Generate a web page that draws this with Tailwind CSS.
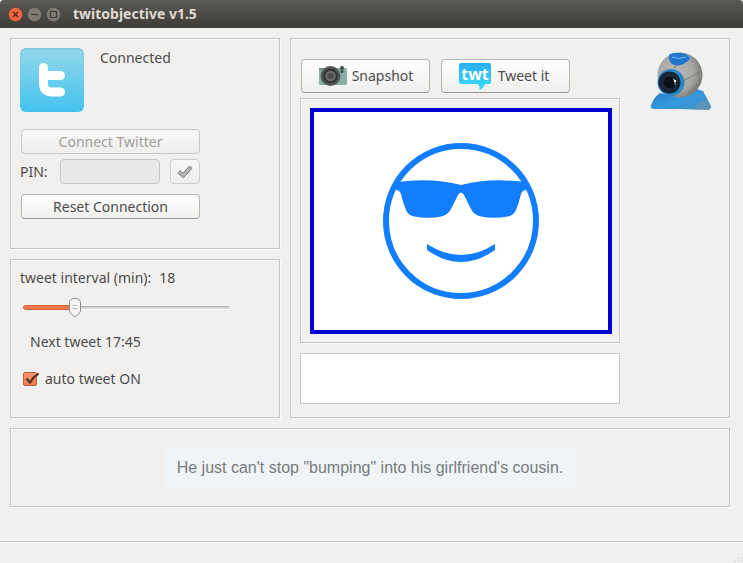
<!DOCTYPE html>
<html lang="en">
<head>
<meta charset="utf-8">
<meta name="viewport" content="width=device-width, initial-scale=1">
<title>twitobjective v1.5</title>
<script src="https://cdn.jsdelivr.net/npm/@tailwindcss/browser@4"></script>
</head>
<body class="flex min-h-screen flex-col bg-[#f1f0ee] font-['Noto_Sans',sans-serif] text-sm leading-5 text-[#4c4c4c]">

<header class="flex h-7 items-center rounded-t bg-linear-to-b from-[#5b5a54] to-[#3d3c37] pl-2">
  <div class="flex gap-1">
    <button type="button" aria-label="Close" class="size-[15px]">
      <svg viewBox="0 0 15 15" class="size-[15px]"><circle cx="7.500" cy="7.500" r="7.200" fill="#ee6540" stroke="#3b352d" stroke-width=".6"/><path d="M5 5l5 5M10 5l-5 5" stroke="#4a2318" stroke-width="1.200"/></svg>
    </button>
    <button type="button" aria-label="Minimize" class="size-[15px]">
      <svg viewBox="0 0 15 15" class="size-[15px]"><circle cx="7.500" cy="7.500" r="7.200" fill="#7d7b74" stroke="#3b3a35" stroke-width=".6"/><path d="M4 7.500h7" stroke="#3c3b37" stroke-width="1.200"/></svg>
    </button>
    <button type="button" aria-label="Maximize" class="size-[15px]">
      <svg viewBox="0 0 15 15" class="size-[15px]"><circle cx="7.500" cy="7.500" r="7.200" fill="#7d7b74" stroke="#3b3a35" stroke-width=".6"/><path d="M4.500 4.500h6v6h-6z" fill="none" stroke="#3c3b37" stroke-width="1.200"/></svg>
    </button>
  </div>
  <h1 class="ml-3 text-sm font-bold text-[#dfdbd2]">twitobjective v1.5</h1>
</header>

<main class="flex flex-1 flex-col gap-2.5 pt-2.5 pr-[13px] pb-[34px] pl-2.5">
  <div class="grid grid-cols-[270px_1fr] gap-2.5">
    <div class="flex flex-col gap-2.5">
      <section class="flex flex-1 flex-col border border-[#c6c5c3] p-[9px] pb-6 shadow-[inset_1px_1px_0_#fbfbfa,1px_1px_0_#fbfbfa]">
        <div class="flex gap-4">
          <svg viewBox="0 0 64 64" class="size-16" role="img" aria-label="Twitter">
            <defs><linearGradient id="sky" x1="0" y1="0" x2="0" y2="1"><stop offset="0" stop-color="#93d8ec"/><stop offset="1" stop-color="#43c3ee"/></linearGradient></defs>
            <rect width="64" height="64" rx="6" fill="url(#sky)"/>
            <path d="M1 6q0-5 5-5h52q5 0 5 5" fill="none" stroke="#73bfd6"/>
            <path d="M23.500 19.500v16q0 8.500 8.500 8.500h8.500M24 27.500h16.500" fill="none" stroke="#fff" stroke-width="9" stroke-linecap="round"/>
          </svg>
          <p>Connected</p>
        </div>
        <div class="mt-[17px] ml-px flex w-[179px] flex-col">
          <button type="button" disabled class="h-[25px] rounded border border-[#c9c8c6] bg-linear-to-b from-[#f8f8f7] to-[#efeeec] text-[#a09f9d]">Connect Twitter</button>
          <div class="mt-[5px] -ml-px flex items-center">
            <label for="pin" class="w-10">PIN:</label>
            <input id="pin" type="text" disabled class="h-[25px] w-[100px] rounded border border-[#c6c5c3] bg-[#e9e9e8] px-2">
            <button type="button" disabled aria-label="Confirm PIN" class="ml-auto flex h-[25px] w-[30px] items-center justify-center rounded border border-[#cfcecc] bg-linear-to-b from-[#f8f8f7] to-[#efeeec]">
              <svg viewBox="0 0 16 14" class="h-3.5 w-4"><path d="M.8 8.200L3.300 5.700 6 8.300 12.600 1 15 3.200 6.500 12.800z" fill="#b5b5b4" stroke="#777" stroke-width=".9"/></svg>
            </button>
          </div>
          <button type="button" class="mt-2.5 h-[25px] rounded border border-[#b7b5b2] border-b-[#999] bg-linear-to-b from-white to-[#efefed]">Reset Connection</button>
        </div>
      </section>

      <section class="border border-[#c6c5c3] px-[9px] pt-2 pb-7 shadow-[inset_1px_1px_0_#fbfbfa,1px_1px_0_#fbfbfa]">
        <div class="flex gap-2">
          <label for="interval">tweet interval (min):</label>
          <output for="interval">18</output>
        </div>
        <div class="relative mt-2 ml-0.5 h-6 w-[208px]">
          <svg viewBox="0 0 208 24" class="absolute inset-0 h-6 w-52" aria-hidden="true">
            <path d="M1 13.500h206" stroke="#fff"/>
            <rect x="1" y="10" width="206" height="3" rx="1.500" fill="#d8d8d6"/>
            <path d="M1 10.500h206" stroke="#b1b0ae"/>
            <rect x="1.500" y="9.500" width="52" height="4" rx="2" fill="#f2784c" stroke="#d3623a"/>
            <path d="M47.500 7q0-4.500 5.500-4.500t5.500 4.500v8q0 2-5.500 6-5.500-4-5.500-6z" fill="#f6f6f5" stroke="#8e8d8b"/>
            <path d="M50.500 9.500h5M50.500 12.500h5" stroke="#bbb"/>
          </svg>
          <input id="interval" type="range" min="5" max="60" value="18" class="absolute inset-0 w-full appearance-none bg-transparent [&::-webkit-slider-thumb]:h-6 [&::-webkit-slider-thumb]:w-3 [&::-webkit-slider-thumb]:appearance-none">
        </div>
        <p class="mt-3 ml-2.5">Next tweet 17:45</p>
        <div class="mt-[17px] ml-[3px] flex items-center gap-2">
          <span class="relative size-3.5">
            <input id="auto" type="checkbox" checked class="block size-3.5 appearance-none rounded-xs border border-[#b5603e] bg-linear-to-b from-[#f7956f] to-[#ee7a4f]">
            <svg viewBox="0 0 16 14" class="pointer-events-none absolute top-0 left-0 h-3.5 w-4" aria-hidden="true"><path d="M3.500 6.500L7 10.500Q10 5 15.500 1.500" fill="none" stroke="#5a3020" stroke-width="2.200"/></svg>
          </span>
          <label for="auto">auto tweet ON</label>
        </div>
      </section>
    </div>

    <section class="flex items-start border border-[#c6c5c3] p-[9px] pb-[13px] shadow-[inset_1px_1px_0_#fbfbfa,1px_1px_0_#fbfbfa]">
      <div class="flex flex-1 flex-col pt-[11px]">
        <div class="ml-px flex gap-[11px]">
          <button type="button" class="flex h-[34px] w-[129px] items-center justify-center gap-1 rounded border border-[#b7b5b2] border-b-[#999] bg-linear-to-b from-white to-[#efefed]">
            <svg viewBox="0 0 30 22" class="h-[22px] w-[30px]" aria-hidden="true">
              <rect x="1" y="3" width="28" height="17" rx="1.500" fill="#89aea5"/>
              <rect x="1" y="3" width="10" height="2" fill="#6f8f88"/>
              <circle cx="12.500" cy="11" r="10" fill="#555657"/>
              <circle cx="12.500" cy="11" r="7.400" fill="#343536"/>
              <circle cx="12.500" cy="11" r="5.200" fill="#6c6d6e"/>
              <circle cx="12.500" cy="11" r="3" fill="#4a4b4c"/>
              <circle cx="24" cy="3" r="2" fill="#3f4b4b"/><circle cx="24" cy="6.500" r="1.500" fill="#3f4b4b"/>
            </svg>
            Snapshot
          </button>
          <button type="button" class="flex h-[34px] w-[129px] items-center justify-center gap-1.5 rounded border border-[#b7b5b2] border-b-[#999] bg-linear-to-b from-white to-[#efefed] pr-1">
            <svg viewBox="0 0 34 30" class="h-[30px] w-[34px]" aria-hidden="true">
              <defs><linearGradient id="bubble" x1="0" y1="0" x2="0" y2="1"><stop offset="0" stop-color="#2aaef0"/><stop offset="1" stop-color="#3bdcfb"/></linearGradient></defs>
              <path d="M3 2h28q2 0 2 2v17q0 2-2 2h-4q-1 4-5.500 6 1-3-1.500-6H3q-2 0-2-2V4q0-2 2-2z" fill="url(#bubble)"/>
              <text x="17" y="19" text-anchor="middle" fill="#fff" class="font-['Noto_Sans',sans-serif] text-base font-bold">twt</text>
            </svg>
            Tweet it
          </button>
        </div>
        <div class="mt-[5px] border border-[#c6c5c3] p-[9px] pr-[7px] pb-2 shadow-[inset_1px_1px_0_#fbfbfa,1px_1px_0_#fbfbfa]">
          <div class="flex h-[226px] items-center justify-center border-4 border-[#0000d0] bg-white">
            <svg viewBox="0 0 156 156" class="size-[156px]" role="img" aria-label="Smiling face with sunglasses">
              <circle cx="78" cy="78" r="75" fill="none" stroke="#127dfe" stroke-width="6"/>
              <path d="M14 39Q50 34.500 78 42 106 34.500 142 39L146 47Q140 46 138 51 136 60 133 67 131 72 125 73.500 110 76 98 73.500 91 72 88 66L81 52Q78 47 75 52L68 66Q65 72 58 73.500 46 76 31 73.500 25 72 23 67 20 60 18 51 16 46 10 47z" fill="#127dfe"/>
              <path d="M44 101Q78 123 112 101v6Q78 131 44 107z" fill="#127dfe"/>
            </svg>
          </div>
        </div>
        <textarea aria-label="Tweet text" class="mt-2.5 block h-[51px] w-full resize-none border border-[#c6c5c3] bg-white p-1"></textarea>
      </div>
      <div class="flex w-[100px] justify-end pt-1 pr-2">
        <svg viewBox="0 0 62 60" class="h-[60px] w-[62px]" role="img" aria-label="Webcam">
          <defs>
            <radialGradient id="ball" cx=".4" cy=".45" r=".65"><stop offset="0" stop-color="#bdbbb8"/><stop offset=".6" stop-color="#aaa8a5"/><stop offset="1" stop-color="#73716f"/></radialGradient>
            <linearGradient id="foot" x1="0" y1="0" x2="1" y2="1"><stop offset="0" stop-color="#2678bd"/><stop offset=".5" stop-color="#3398df"/><stop offset="1" stop-color="#4a8fbd"/></linearGradient>
          </defs>
          <path d="M10 41Q30 49 47 37L53 39 61 54Q61 58 57 58L30 57 4 57Q0 57 1 53 4 45 10 41z" fill="url(#foot)"/>
          <path d="M45 53L56 48 61 55Q61 58 57 58L46 58z" fill="#7198ad" opacity=".5"/>
          <circle cx="30" cy="23" r="22.500" fill="url(#ball)"/>
          <path d="M33 29L50 20M38 41Q46 37 51 29" fill="none" stroke="#6d6b69" stroke-width=".8"/>
          <path d="M20 2Q29-1 38 3 42 5 39 8 33 14 26 13.500 20 12 19 7 18 4 20 2z" fill="#2277cd"/>
          <path d="M22 5Q28 8 36 5M37 2l3 4" fill="none" stroke="#76b9ee" stroke-width="1"/>
          <circle cx="25" cy="15" r=".8" fill="#444"/>
          <circle cx="21" cy="30.500" r="13.500" fill="#2787c9"/>
          <circle cx="19.500" cy="30.500" r="11" fill="#192637"/>
          <circle cx="19.500" cy="30.500" r="6" fill="#0c1119"/>
          <path d="M23 27q3 2 2 6" fill="none" stroke="#7790a2" stroke-width="1.200"/>
          <circle cx="25" cy="29" r="1.200" fill="#eef3f5"/>
        </svg>
      </div>
    </section>
  </div>

  <section class="flex min-h-[79px] items-center justify-center border border-[#c6c5c3] shadow-[inset_1px_1px_0_#fbfbfa,1px_1px_0_#fbfbfa]">
    <p class="rounded-sm bg-[#f1f4f6] px-3 py-2 font-['Liberation_Sans',sans-serif] text-base leading-6 text-[#777b80]">He just can't stop "bumping" into his girlfriend's cousin.</p>
  </section>
</main>

<footer class="flex h-[22px] items-end justify-end border-t border-[#c9c8c6] shadow-[inset_0_1px_0_#fbfbfa]">
  <svg viewBox="0 0 9 9" class="size-[9px]" aria-hidden="true"><path d="M7 1h1M4 4h1M7 4h1M1 7h1M4 7h1M7 7h1" stroke="#c3c2c0"/></svg>
</footer>
</body>
</html>
